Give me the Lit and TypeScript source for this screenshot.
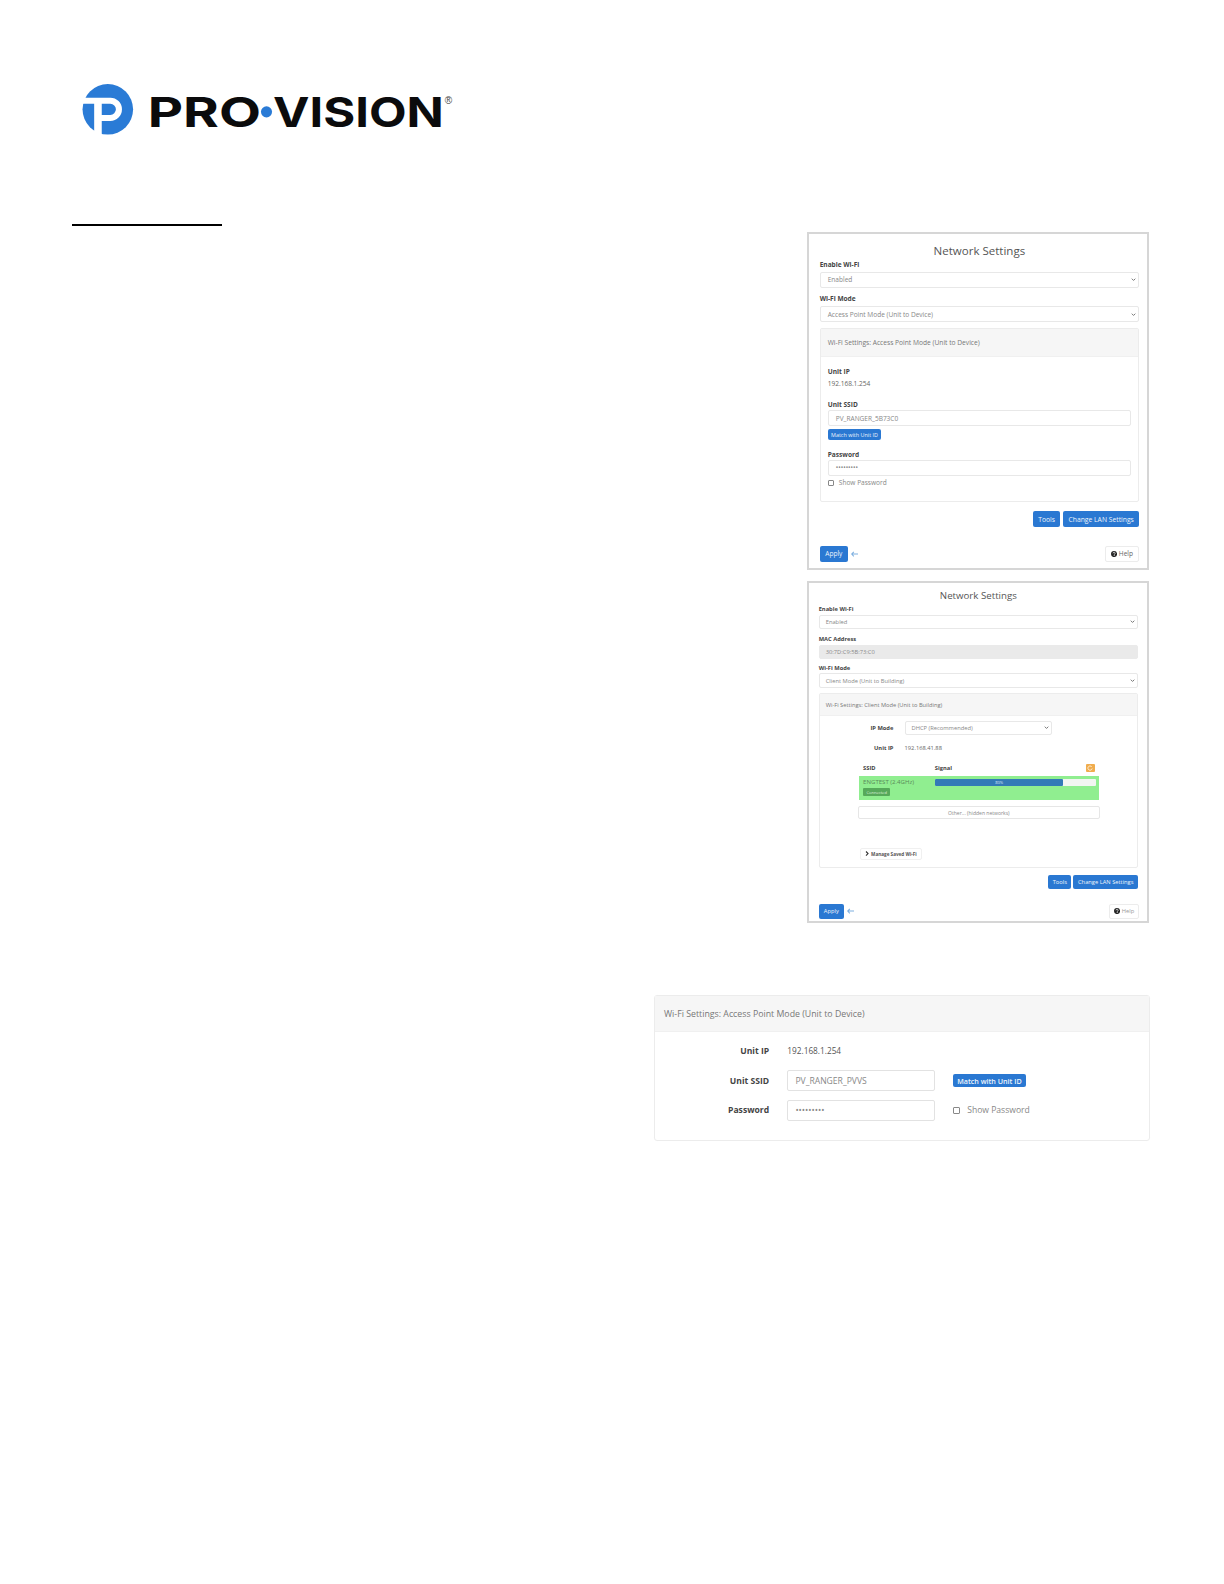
import { LitElement, html, css } from "lit";
import { customElement } from "lit/decorators.js";

const chevron = html`<svg class="chev" viewBox="0 0 10 10"><path d="M2.5 3.8l2.5 2.5 2.5-2.5" fill="none" stroke="#777" stroke-width="1.4"/></svg>`;
const arrow = html`<svg class="arrow" viewBox="0 0 10 8"><path d="M4 .8L1 4l3 3.2M1.2 4H10" fill="none" stroke="#7fb0e0" stroke-width="1.5"/></svg>`;
const helpIcon = html`<svg class="qm" viewBox="0 0 12 12"><circle cx="6" cy="6" r="6" fill="#222"/><path d="M4 4.6c0-2.6 4.2-2.6 4.2-.2 0 1.5-1.8 1.5-1.8 3" fill="none" stroke="#fff" stroke-width="1.5"/><rect x="5.4" y="8.3" width="1.8" height="1.7" fill="#fff"/></svg>`;

@customElement("app-root")
export class AppRoot extends LitElement {
  static styles = css`
    :host { display: block; width: 1224px; height: 1584px; background: #fff; font-family: "Open Sans", "Noto Sans", sans-serif; color: #666; overflow: hidden; }
    * { box-sizing: border-box; }
    .page { display: flex; flex-direction: column; padding-top: 78px; zoom: 1.0107; }
    .logo { display: block; margin-left: 77px; width: 380px; height: 60px; }
    .word { font-family: Inter, sans-serif; font-weight: 700; font-size: 41px; fill: #0b0b0c; }
    .reg { font-family: "Liberation Sans", sans-serif; font-size: 10px; fill: #444; }
    .rule { width: 149px; height: 2px; background: #000; margin: 84px 0 0 71px; }
    .stack { display: flex; flex-direction: column; align-items: flex-end; padding-right: 74px; width: 1211px; }
    .panel { width: 339px; border: 2px solid #d6d6d6; display: flex; flex-direction: column; }
    .p1 { height: 334px; margin-top: 6px; padding: 0 8px 0 11px; font-size: 6.5px; }
    .p2 { height: 338px; margin-top: 11px; padding: 4px 9px 0 10px; font-size: 5.7px; }
    .title { text-align: center; color: #555; white-space: nowrap; }
    .p1 .title { font-size: 11.4px; line-height: 16px; height: 24px; padding-top: 8px; }
    .p2 .title { font-size: 9.6px; line-height: 18px; height: 18px; }
    .label { font-weight: 700; color: #444; white-space: nowrap; }
    .p1 .label { height: 12px; line-height: 12px; }
    .p2 .label { height: 8px; line-height: 8px; }
    .field { display: flex; align-items: center; justify-content: space-between; border: 1px solid #e8e8e8; border-radius: 2px; background: #fff; color: #888; white-space: nowrap; }
    .chev { width: 7px; height: 7px; flex: none; }
    .p1 .field { height: 16px; padding: 0 1px 0 7px; }
    .p1 .sel { margin-top: 1px; }
    .p1 .second { margin-top: 5px; }
    .p2 .field { padding: 0 1px 0 6px; }
    .p2 .s1 { height: 13px; margin-top: 2px; }
    .p2 .m1 { margin-top: 6px; }
    .p2 .mac { height: 14px; margin-top: 2px; background: #eaeaea; border-color: #eaeaea; }
    .p2 .m2 { margin-top: 5px; }
    .p2 .s2 { height: 15px; margin-top: 1px; }
    .card { border: 1px solid #ececec; border-radius: 2px; display: flex; flex-direction: column; }
    .head { background: #f6f6f6; border-bottom: 1px solid #f0f0f0; display: flex; align-items: center; white-space: nowrap; color: #777; }
    .p1 .card { margin-top: 6px; height: 172px; }
    .p1 .head { height: 27px; padding-left: 7px; font-size: 6.6px; }
    .p1 .body { padding: 9px 7px 0 7px; display: flex; flex-direction: column; }
    .p1 .body .label { height: 12px; line-height: 12px; }
    .val { color: #666; white-space: nowrap; }
    .p1 .val { height: 12px; line-height: 12px; }
    .p1 .lb2 { margin-top: 10px; height: 10px !important; line-height: 10px !important; }
    .p1 .lb3 { margin-top: 9px; height: 10px !important; line-height: 10px !important; }
    .btn { display: inline-flex; align-items: center; justify-content: center; background: #2a78d2; color: #eef5fc; border-radius: 2px; white-space: nowrap; }
    .p1 .match { width: 53px; height: 11px; margin-top: 3px; font-size: 5.4px; }
    .check { display: flex; align-items: center; white-space: nowrap; color: #888; }
    .box { display: block; border: 1px solid #888; border-radius: 1px; background: #fff; flex: none; }
    .p1 .check { height: 10px; margin-top: 2px; gap: 5px; }
    .p1 .box { width: 6px; height: 6px; }
    .actions { display: flex; justify-content: flex-end; }
    .p1 .actions { margin-top: 9px; gap: 3px; font-size: 6.7px; }
    .p1 .actions .btn { height: 16px; }
    .p1 .tools { width: 27px; }
    .p1 .lan { width: 75px; }
    .foot { display: flex; align-items: center; }
    .arrow { width: 7px; height: 6px; margin-left: 3px; }
    .help { margin-left: auto; display: inline-flex; align-items: center; justify-content: center; gap: 2px; border: 1px solid #ececec; border-radius: 2px; background: #fff; color: #666; white-space: nowrap; }
    .qm { width: 6px; height: 6px; }
    .p1 .foot { margin-top: 18px; }
    .p1 .apply { width: 28px; height: 16px; }
    .p1 .help { width: 34px; height: 16px; }
    .p2 .card { margin-top: 5px; height: 173px; }
    .p2 .head { height: 22px; padding-left: 6px; font-size: 5.65px; }
    .p2 .body { padding-top: 5px; display: flex; flex-direction: column; }
    .inline { display: flex; align-items: center; }
    .inline .label { width: 73px; text-align: right; margin-right: 11px; }
    .p2 .ip { height: 13px; width: 146px; }
    .p2 .r2 { margin-top: 7px; height: 12px; }
    .net { margin: 10px 0 0 39px; width: 237px; }
    .nhead { height: 12px; display: flex; align-items: flex-start; position: relative; font-weight: 700; color: #444; line-height: 8px; }
    .nhead span:first-child { width: 75px; padding-left: 4px; }
    .refresh { position: absolute; right: 4px; top: 0; width: 8px; height: 8px; background: #f0ad4e; border-radius: 1px; display: flex; align-items: center; justify-content: center; }
    .refresh svg { width: 6px; height: 6px; }
    .nrow { height: 24px; background: #90ee90; display: flex; padding: 3px 3px 0 4px; }
    .ncol { width: 71px; display: flex; flex-direction: column; }
    .nname { color: #5a8a5a; white-space: nowrap; line-height: 7px; height: 8px; font-size: 6px; }
    .badge { width: 27px; height: 8px; background: #56a85a; color: #dff3df; border-radius: 1px; font-size: 4px; display: flex; align-items: center; justify-content: center; margin-top: 1px; }
    .prog { flex: 1; height: 7px; background: #f2f5f2; border-radius: 1px; display: flex; }
    .bar { background: #337ab7; color: #dbe8f5; font-size: 4px; border-radius: 1px; display: flex; align-items: center; justify-content: center; }
    .other { margin: 6px 0 0 -1px; width: 239px; height: 13px; border: 1px solid #e6e6e6; border-radius: 2px; display: flex; align-items: center; justify-content: center; color: #888; font-size: 5px; background: #fff; }
    .manage { margin: 28px 0 0 40px; width: 61px; height: 12px; border: 1px solid #f0f0f0; border-radius: 2px; display: flex; align-items: center; justify-content: center; gap: 2px; font-weight: 700; font-size: 4.6px; color: #555; white-space: nowrap; }
    .manage svg { width: 4px; height: 5px; }
    .p2 .actions { margin-top: 7px; gap: 2px; }
    .p2 .actions .btn { height: 14px; }
    .p2 .tools { width: 23px; }
    .p2 .lan { width: 64px; }
    .p2 .foot { margin-top: 15px; }
    .p2 .apply { width: 25px; height: 14px; }
    .p2 .help { width: 30px; height: 14px; color: #999; margin-right: -1px; }
    .wide { width: 491px; height: 144px; margin-top: 72px; margin-right: -1px; font-size: 8.5px; border-radius: 3px; }
    .wide .head { height: 35px; padding-left: 9px; font-size: 8.7px; }
    .wide .val { color: #555; font-size: 8.2px; }
    .grid { display: grid; grid-template-columns: 113px 146px auto; column-gap: 18px; align-items: center; grid-template-rows: 23px 21px 21px; row-gap: 8px; padding-top: 7px; }
    .grid .label { text-align: right; color: #444; }
    .grid .field { height: 21px; padding: 0 7px; color: #888; border-color: #e2e2e2; }
    .grid .btn { width: 72px; height: 13px; font-size: 7.1px; font-weight: 600; }
    .grid .check { gap: 7px; }
    .grid .box { width: 7px; height: 7px; }
  `;

  render() {
    return html`<div class="page">
      <svg class="logo" viewBox="78 78 380 60" role="img" aria-label="Pro-Vision logo">
        <clipPath id="c"><rect x="78" y="78" width="60" height="55.5"/></clipPath>
        <circle cx="107.5" cy="108" r="25" fill="#2a7bd6" clip-path="url(#c)"/>
        <path d="M80 96.5H110a11.5 11.5 0 0 1 0 23H101.5V136H94V102.5H80Z M101.5 102.5V113.5H110a5.5 5.5 0 0 0 0-11Z" fill="#fff" fill-rule="evenodd" clip-path="url(#c)"/>
        <text class="word" x="147" y="125.5" textLength="112" lengthAdjust="spacingAndGlyphs">PRO</text>
        <circle cx="264.5" cy="110.5" r="5.5" fill="#2a7bd6"/>
        <text class="word" x="271" y="125.5" textLength="169" lengthAdjust="spacingAndGlyphs">VISION</text>
        <text class="reg" x="441" y="103">®</text>
      </svg>
      <div class="rule"></div>
      <div class="stack">
        <section class="panel p1">
          <div class="title">Network Settings</div>
          <div class="label">Enable Wi-Fi</div>
          <div class="field sel"><span>Enabled</span>${chevron}</div>
          <div class="label second">Wi-Fi Mode</div>
          <div class="field sel"><span>Access Point Mode (Unit to Device)</span>${chevron}</div>
          <div class="card">
            <div class="head">Wi-Fi Settings: Access Point Mode (Unit to Device)</div>
            <div class="body">
              <div class="label">Unit IP</div>
              <div class="val">192.168.1.254</div>
              <div class="label lb2">Unit SSID</div>
              <div class="field">PV_RANGER_5B73C0</div>
              <div><span class="btn match">Match with Unit ID</span></div>
              <div class="label lb3">Password</div>
              <div class="field">•••••••••</div>
              <div class="check"><span class="box"></span>Show Password</div>
            </div>
          </div>
          <div class="actions"><span class="btn tools">Tools</span><span class="btn lan">Change LAN Settings</span></div>
          <div class="foot"><span class="btn apply">Apply</span>${arrow}<span class="help">${helpIcon}Help</span></div>
        </section>

        <section class="panel p2">
          <div class="title">Network Settings</div>
          <div class="label">Enable Wi-Fi</div>
          <div class="field s1"><span>Enabled</span>${chevron}</div>
          <div class="label m1">MAC Address</div>
          <div class="field mac">30:7D:C9:5B:73:C0</div>
          <div class="label m2">Wi-Fi Mode</div>
          <div class="field s2"><span>Client Mode (Unit to Building)</span>${chevron}</div>
          <div class="card">
            <div class="head">Wi-Fi Settings: Client Mode (Unit to Building)</div>
            <div class="body">
              <div class="inline"><div class="label">IP Mode</div><div class="field ip"><span>DHCP (Recommended)</span>${chevron}</div></div>
              <div class="inline r2"><div class="label">Unit IP</div><div class="val">192.168.41.88</div></div>
              <div class="net">
                <div class="nhead"><span>SSID</span><span>Signal</span><span class="refresh"><svg viewBox="0 0 8 8"><path d="M6.4 2.6A2.8 2.8 0 1 0 6.8 4.6" fill="none" stroke="#fff" stroke-width="1"/></svg></span></div>
                <div class="nrow">
                  <div class="ncol"><div class="nname">ENGTEST (2.4GHz)</div><div class="badge">Connected</div></div>
                  <div class="prog"><div class="bar" style="width: 80%">80%</div></div>
                </div>
                <div class="other">Other... (hidden networks)</div>
              </div>
              <div class="manage"><svg viewBox="0 0 4 5"><path d="M1 .5l2 2-2 2" fill="none" stroke="#333" stroke-width="1.1"/></svg>Manage Saved Wi-Fi</div>
            </div>
          </div>
          <div class="actions"><span class="btn tools">Tools</span><span class="btn lan">Change LAN Settings</span></div>
          <div class="foot"><span class="btn apply">Apply</span>${arrow}<span class="help">${helpIcon}Help</span></div>
        </section>

        <section class="card wide">
          <div class="head">Wi-Fi Settings: Access Point Mode (Unit to Device)</div>
          <div class="grid">
            <div class="label">Unit IP</div><div class="val">192.168.1.254</div><div></div>
            <div class="label">Unit SSID</div><div class="field">PV_RANGER_PVVS</div><div><span class="btn">Match with Unit ID</span></div>
            <div class="label">Password</div><div class="field">•••••••••</div><div class="check"><span class="box"></span>Show Password</div>
          </div>
        </section>
      </div>
    </div>`;
  }
}
